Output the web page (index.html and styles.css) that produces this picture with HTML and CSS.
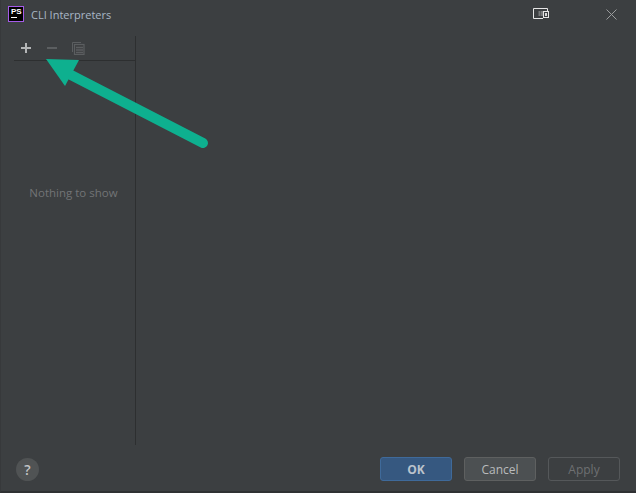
FILE: index.html
```html
<!DOCTYPE html>
<html lang="en">
<head>
<meta charset="utf-8">
<title>CLI Interpreters</title>
<link rel="stylesheet" href="styles.css">
</head>
<body>
<div class="dialog">
  <header class="titlebar">
    <div class="ps-logo"><span class="ps-text">PS</span><span class="ps-bar"></span></div>
    <span class="title">CLI Interpreters</span>
    <svg class="win-icon" width="16" height="12" viewBox="0 0 16 12"><path d="M14.5 3V0.5H0.5V10.5H10" fill="none" stroke="#e6e6e6"/><rect x="5.5" y="3" width="2" height="5" fill="#77797a"/><rect x="8" y="3" width="2" height="5" fill="#77797a"/><rect x="10.5" y="3.5" width="5" height="6" fill="#3c3f41" stroke="#e6e6e6"/><rect x="12" y="5" width="2" height="3" fill="#d8d8d8"/></svg>
    <svg class="close-icon" width="11" height="11" viewBox="0 0 11 11"><path d="M0.5 0.5L10.5 10.5M10.5 0.5L0.5 10.5" stroke="#9a9c9d" stroke-width="1"/></svg>
  </header>
  <main class="content">
    <aside class="sidebar">
      <div class="toolbar">
        <svg class="tool" width="12" height="12" viewBox="0 0 12 12"><path d="M6 1V11M1 6H11" stroke="#b4b6b7" stroke-width="2"/></svg>
        <svg class="tool" width="12" height="12" viewBox="0 0 12 12"><path d="M1 6H11" stroke="#5b5e60" stroke-width="2"/></svg>
        <svg class="tool" width="13" height="13" viewBox="0 0 13 13"><path d="M0.5 10V0.5H9" fill="none" stroke="#5b5e60"/><rect x="2.5" y="2.5" width="9.5" height="10" fill="none" stroke="#5b5e60" stroke-width="1.2"/><path d="M4 5.5H11M4 8H11M4 10.5H11" stroke="#5b5e60" stroke-width="1.4"/></svg>
      </div>
      <div class="empty">Nothing to show</div>
    </aside>
    <section class="details"></section>
  </main>
  <footer class="footer">
    <button class="help" type="button">?</button>
    <div class="actions">
      <button class="btn btn-ok" type="button">OK</button>
      <button class="btn" type="button">Cancel</button>
      <button class="btn btn-off" type="button">Apply</button>
    </div>
  </footer>
</div>
<svg class="arrow" width="636" height="493" viewBox="0 0 636 493"><path d="M71 75L203 143" stroke="#0eb08f" stroke-width="10" stroke-linecap="round" fill="none"/><path d="M46 59L79 60L65 86Z" fill="#0eb08f"/></svg>
</body>
</html>
```
FILE: styles.css
```css
html, body {
  margin: 0;
  padding: 0;
  background: #3c3f41;
}
body {
  position: relative;
  width: 636px;
  height: 493px;
  overflow: hidden;
  font-family: "Open Sans", "Noto Sans", sans-serif;
}
.dialog {
  box-sizing: border-box;
  width: 636px;
  height: 493px;
  display: flex;
  flex-direction: column;
  background: #3c3f41;
  border-left: 1px solid #37393b;
  border-bottom: 2px solid #2f3133;
}
.titlebar {
  display: flex;
  align-items: center;
  height: 30px;
  padding: 0 19px 2px 7px;
  box-sizing: border-box;
  flex: none;
}
.ps-logo {
  box-sizing: border-box;
  width: 16px;
  height: 16px;
  background: #000;
  border: 1px solid #a45be8;
  display: flex;
  flex-direction: column;
  padding: 1px 2px;
  margin-right: 7px;
}
.ps-text {
  font: bold 8px/8px "Liberation Sans", sans-serif;
  color: #fff;
}
.ps-bar {
  width: 6px;
  height: 1px;
  margin-top: 1px;
  background: #fff;
}
.title {
  font-size: 11px;
  color: #a9b7c6;
  flex: 1;
}
.win-icon {
  margin-right: 57px;
}
.content {
  flex: 1;
  display: flex;
  padding: 6px 0 0 13px;
  min-height: 0;
}
.sidebar {
  box-sizing: border-box;
  width: 122px;
  height: 409px;
  border-right: 1px solid #2d2f30;
  display: flex;
  flex-direction: column;
}
.toolbar {
  box-sizing: border-box;
  height: 25px;
  border-bottom: 1px solid #2d2f30;
  display: flex;
  align-items: center;
  gap: 14px;
  padding-left: 6px;
}
.empty {
  flex: 1;
  padding: 124px 2px 0 0;
  text-align: center;
  font-size: 11.5px;
  color: #727476;
}
.details {
  flex: 1;
}
.footer {
  flex: none;
  display: flex;
  align-items: center;
  justify-content: space-between;
  box-sizing: border-box;
  height: 46px;
  padding: 2px 16px 0 15px;
}
.help {
  width: 23px;
  height: 23px;
  padding: 0;
  border: none;
  border-radius: 50%;
  background: #505354;
  color: #c4c6c7;
  font: 600 14px/23px "Open Sans", sans-serif;
}
.actions {
  display: flex;
  gap: 12px;
}
.btn {
  box-sizing: border-box;
  width: 72px;
  height: 24px;
  padding: 2px 0 0;
  border: 1px solid #5e6060;
  border-radius: 3px;
  background: #4c5052;
  color: #b9bbbc;
  font: 12px/20px "Open Sans", sans-serif;
}
.btn-ok {
  background: #365880;
  border-color: #3f6a9a;
  color: #bbc3cc;
  font-weight: 700;
}
.btn-off {
  background: transparent;
  border-color: #55585a;
  color: #6e7072;
}
.arrow {
  position: absolute;
  left: 0;
  top: 0;
  pointer-events: none;
}
```
